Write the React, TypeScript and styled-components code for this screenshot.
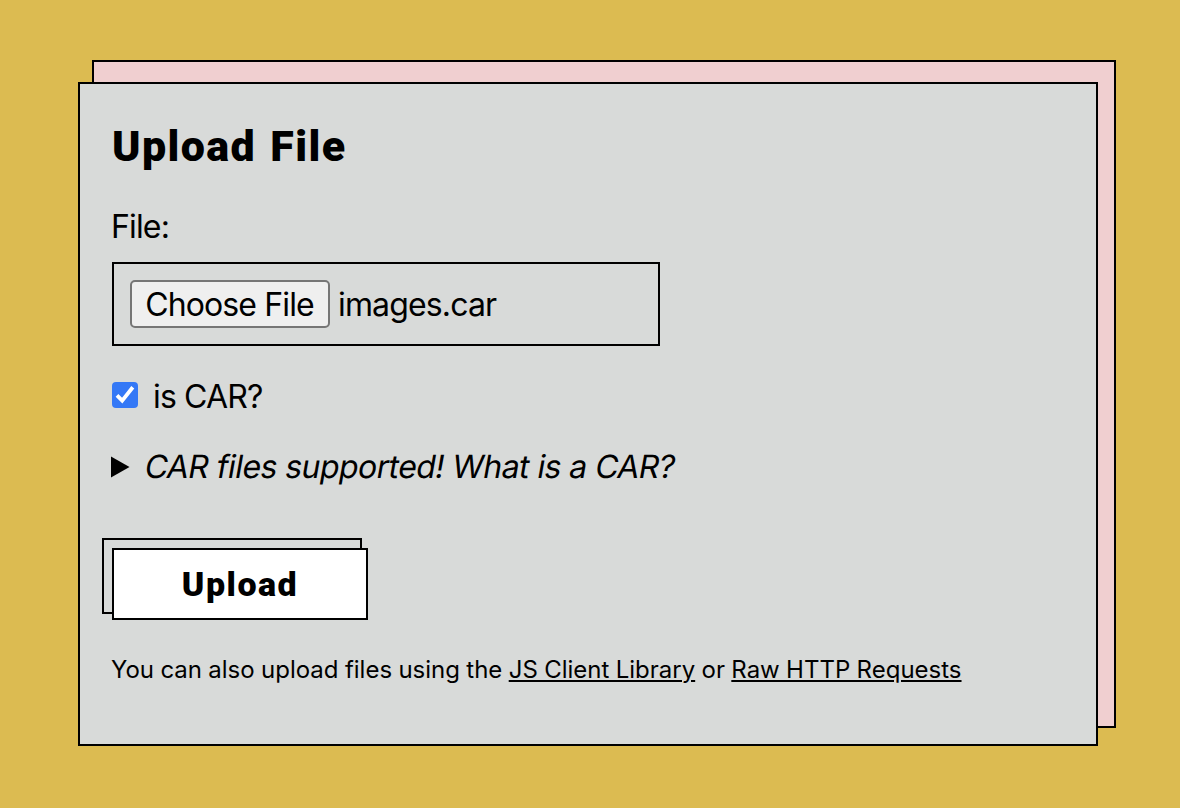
import React, { useState } from "react";
import styled, { createGlobalStyle } from "styled-components";

const GlobalStyle = createGlobalStyle`
  *, *::before { box-sizing: border-box; }
  body {
    margin: 0;
    background: #dcbb51;
    color: #000;
    font-family: Inter, "Liberation Sans", sans-serif;
  }
`;

const Page = styled.main`
  height: 808px;
  padding: 82px 82px 62px 78px;
  overflow: hidden;
`;

const Card = styled.section`
  position: relative;
  z-index: 0;
  width: 1020px;
  height: 664px;

  &::before {
    content: "";
    position: absolute;
    z-index: -1;
    top: -22px;
    left: 14px;
    width: 1024px;
    height: 668px;
    border: 2px solid #000;
    background: #f0cfd0;
  }
`;

const Form = styled.form`
  display: flex;
  flex-direction: column;
  align-items: flex-start;
  height: 100%;
  padding: 36px 32px 0;
  border: 2px solid #000;
  background: #d8dad9;
`;

const Title = styled.h2`
  margin: 0;
  font: 900 43px/52px Roboto, sans-serif;
  letter-spacing: 1.4px;
  word-spacing: 2px;
  white-space: nowrap;
`;

const Label = styled.label`
  font-size: 32px;
  line-height: 40px;
  letter-spacing: -0.85px;
  white-space: nowrap;
`;

const FileLabel = styled(Label)`
  margin: 35px 0 0 -1px;
`;

const FileField = styled.div`
  display: flex;
  align-items: center;
  gap: 8px;
  width: 548px;
  height: 84px;
  margin-top: 15px;
  padding: 0 16px;
  border: 2px solid #000;
`;

const FileName = styled(Label)`
  padding-top: 2px;
`;

const ChooseButton = styled.button`
  width: 200px;
  height: 48px;
  padding: 2px 1px 0 0;
  border: 2px solid #767676;
  border-radius: 5px;
  background: #efefef;
  color: #000;
  font: 400 32px/40px Inter, sans-serif;
  letter-spacing: -0.87px;
  white-space: nowrap;
`;

const CheckRow = styled.div`
  display: flex;
  gap: 15px;
  margin-top: 31px;
`;

const CheckBox = styled.button`
  width: 26px;
  height: 26px;
  margin-top: 5px;
  padding: 0;
  border: 0;
  border-radius: 4px;
  background: #3478f6;

  svg { display: block; }
`;

const Details = styled.details`
  margin: 30px 0 0 -1px;
`;

const Summary = styled.summary`
  display: flex;
  align-items: center;
  gap: 13px;
  font-size: 32px;
  line-height: 40px;
  letter-spacing: -0.57px;
  white-space: nowrap;
  list-style: none;
`;

const Slanted = styled.span`
  display: inline-block;
  transform: skewX(-10deg);
  transform-origin: 0 32px;
`;

const UploadButton = styled.button`
  position: relative;
  width: 256px;
  height: 72px;
  margin-top: 61px;
  padding: 0;
  border: 2px solid #000;
  background: #fff;
  color: #000;
  font: 900 34px/68px Roboto, sans-serif;
  letter-spacing: 1.5px;

  &::before {
    content: "";
    position: absolute;
    top: -12px;
    left: -12px;
    width: 260px;
    height: 76px;
    border: 2px solid #000;
    clip-path: polygon(0 0, 100% 0, 100% 10px, 10px 10px, 10px 100%, 0 100%);
  }
`;

const Note = styled.p`
  margin: 34px 0 0 -1px;
  font-size: 24px;
  line-height: 32px;
  word-spacing: -0.4px;
  white-space: nowrap;
`;

const Link = styled.a`
  color: inherit;
  text-decoration: underline;
  text-decoration-thickness: 2px;
  text-underline-offset: 2px;
`;

export default function App() {
  const [isCar, setIsCar] = useState(true);
  return (
    <>
      <GlobalStyle />
      <Page>
        <Card>
          <Form onSubmit={(e) => e.preventDefault()}>
            <Title>Upload File</Title>
            <FileLabel>File:</FileLabel>
            <FileField>
              <ChooseButton type="button">Choose File</ChooseButton>
              <FileName as="span">images.car</FileName>
            </FileField>
            <CheckRow>
              <CheckBox type="button" role="checkbox" aria-checked={isCar} aria-label="is CAR?" onClick={() => setIsCar(!isCar)}>
                {isCar && (
                  <svg width="26" height="26" viewBox="0 0 26 26" fill="none" stroke="#fff" strokeWidth="3.8">
                    <path d="M5 13.3 10.2 18.6 20.8 5.2" />
                  </svg>
                )}
              </CheckBox>
              <Label as="span">is CAR?</Label>
            </CheckRow>
            <Details>
              <Summary>
                <svg width="19" height="22" viewBox="0 0 19 22"><path d="M0 .5V21.5L18.5 11Z" /></svg>
                <Slanted>CAR files supported! What is a CAR?</Slanted>
              </Summary>
            </Details>
            <UploadButton type="submit">Upload</UploadButton>
            <Note>
              You can also upload files using the <Link href="#js">JS Client Library</Link> or{" "}
              <Link href="#http">Raw HTTP Requests</Link>
            </Note>
          </Form>
        </Card>
      </Page>
    </>
  );
}
